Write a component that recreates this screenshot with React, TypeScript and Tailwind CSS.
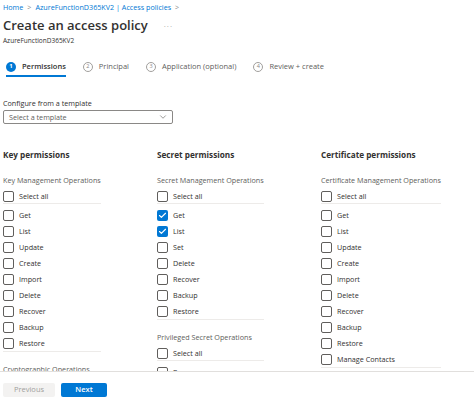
import { Check, ChevronDown } from 'lucide-react';

type Item = { label: string; checked?: boolean };

function Box({ checked }: { checked?: boolean }) {
  if (checked) {
    return (
      <span className="w-[11px] h-[11px] rounded-[2px] bg-[#0078d4] flex items-center justify-center shrink-0">
        <Check className="w-[9px] h-[9px] text-white" strokeWidth={3} />
      </span>
    );
  }
  return <span className="w-[11px] h-[11px] rounded-[2px] border border-[#605e5c] bg-white shrink-0" />;
}

function Row({ label, checked }: Item) {
  return (
    <div className="h-[16px] flex items-center gap-[5px] text-[7.2px] text-[#323130]">
      <Box checked={checked} />
      <span>{label}</span>
    </div>
  );
}

function Group({ title, items, first }: { title: string; items: Item[]; first?: boolean }) {
  return (
    <div className={first ? 'mt-[14px]' : 'mt-[12px]'}>
      <div className="h-[10px] leading-[10px] text-[7.2px] text-[#605e5c] whitespace-nowrap">{title}</div>
      <div className="mt-[4px] h-[14px] flex items-center gap-[5px] text-[7.2px] text-[#323130]">
        <Box />
        <span>Select all</span>
      </div>
      <div className="h-px bg-[#edebe9]" />
      <div className="mt-[3px]">
        {items.map((it) => (
          <Row key={it.label} {...it} />
        ))}
      </div>
      {items.length > 1 && <div className="h-px bg-[#edebe9]" />}
    </div>
  );
}

function Column({ heading, children, width }: { heading: string; children: React.ReactNode; width: string }) {
  return (
    <div className={`${width} shrink-0`}>
      <div className="h-[12px] leading-[12px] text-[8.2px] font-bold text-[#323130]">{heading}</div>
      <div className="w-fit">{children}</div>
    </div>
  );
}

function Step({ n, label, active }: { n: number; label: string; active?: boolean }) {
  return (
    <div className={`h-[19px] flex items-center gap-[6px] border-b-2 ${active ? 'border-[#0078d4]' : 'border-transparent'}`}>
      {active ? (
        <span className="w-[10px] h-[10px] rounded-full bg-[#0078d4] text-white text-[6px] font-bold flex items-center justify-center">{n}</span>
      ) : (
        <span className="w-[10px] h-[10px] rounded-full border border-[#a19f9d] text-[#8a8886] text-[5.5px] flex items-center justify-center">{n}</span>
      )}
      <span className={`text-[7.5px] ${active ? 'font-semibold text-[#323130]' : 'text-[#605e5c]'}`}>{label}</span>
    </div>
  );
}

const ops = ['Get', 'List', 'Update', 'Create', 'Import', 'Delete', 'Recover', 'Backup', 'Restore'];

export default function App() {
  return (
    <div className="w-[474px] h-[402px] bg-white flex flex-col overflow-hidden" style={{ fontFamily: '"Open Sans", "Noto Sans", sans-serif' }}>
      <div className="h-[371px] overflow-hidden px-[3px]">
        <div className="h-[15px] flex items-center gap-[4px] text-[7.2px] text-[#0078d4]">
          <span>Home</span>
          <span className="text-[#8a8886]">&gt;</span>
          <span>AzureFunctionD365KV2 | Access policies</span>
          <span className="text-[#8a8886]">&gt;</span>
        </div>
        <div className="h-[22px] flex items-center gap-[16px]">
          <h1 className="text-[13px] font-semibold text-[#323130]">Create an access policy</h1>
          <span className="text-[8px] text-[#a19f9d] tracking-[1px]">···</span>
        </div>
        <div className="h-[8px] leading-[8px] text-[6.5px] text-[#323130]">AzureFunctionD365KV2</div>

        <div className="mt-[13px] pl-[3px] flex gap-[17px]">
          <Step n={1} label="Permissions" active />
          <Step n={2} label="Principal" />
          <Step n={3} label="Application (optional)" />
          <Step n={4} label="Review + create" />
        </div>

        <div className="mt-[21px] h-[10px] leading-[10px] text-[7.2px] text-[#323130]">Configure from a template</div>
        <div className="mt-[2px] w-[170px] h-[14px] border border-[#8a8886] rounded-[2px] flex items-center justify-between pl-[5px] pr-[4px]">
          <span className="text-[7.2px] text-[#605e5c]">Select a template</span>
          <ChevronDown className="w-[10px] h-[10px] text-[#605e5c]" strokeWidth={1.5} />
        </div>

        <div className="mt-[25px] flex">
          <Column heading="Key permissions" width="w-[154px]">
            <Group title="Key Management Operations" items={ops.map((l) => ({ label: l }))} first />
            <div className="mt-[12px] h-[10px] leading-[10px] text-[7.2px] text-[#605e5c] whitespace-nowrap">Cryptographic Operations</div>
          </Column>
          <Column heading="Secret permissions" width="w-[164px]">
            <Group
              title="Secret Management Operations"
              items={[
                { label: 'Get', checked: true },
                { label: 'List', checked: true },
                { label: 'Set' },
                { label: 'Delete' },
                { label: 'Recover' },
                { label: 'Backup' },
                { label: 'Restore' },
              ]}
              first
            />
            <Group title="Privileged Secret Operations" items={[{ label: 'Purge' }]} />
          </Column>
          <Column heading="Certificate permissions" width="w-[150px]">
            <Group
              title="Certificate Management Operations"
              items={[...ops, 'Manage Contacts'].map((l) => ({ label: l }))}
              first
            />
          </Column>
        </div>
      </div>

      <div className="border-t border-[#e1dfdd] flex gap-[6px] px-[3px] pt-[11px]">
        <button className="w-[52px] h-[14px] bg-[#f3f2f1] text-[#a19f9d] text-[7.5px] rounded-[2px]">Previous</button>
        <button className="w-[46px] h-[14px] bg-[#0078d4] text-white text-[7.5px] font-semibold rounded-[2px]">Next</button>
      </div>
    </div>
  );
}
